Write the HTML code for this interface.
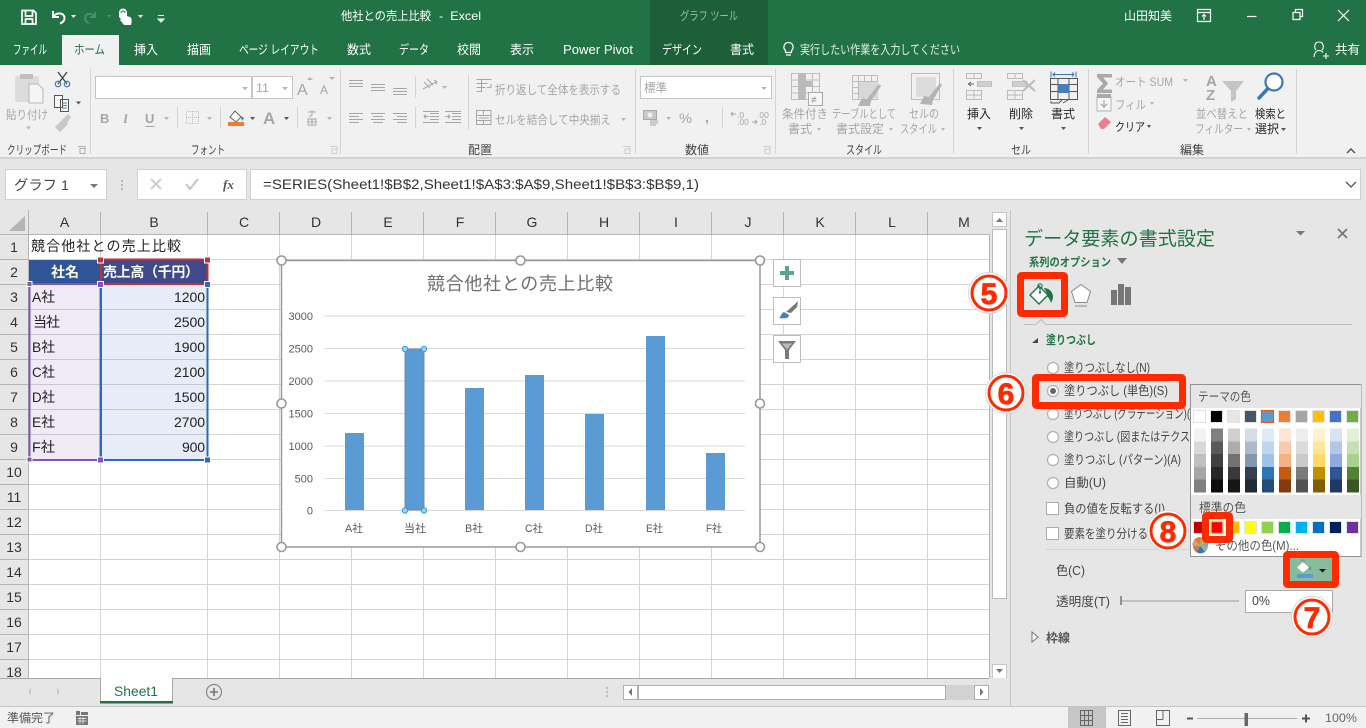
<!DOCTYPE html>
<html lang="ja"><head><meta charset="utf-8"><title>他社との売上比較 - Excel</title>
<style>
html,body{margin:0;padding:0;width:1366px;height:728px;overflow:hidden;background:#e6e6e6}
svg{display:block;position:absolute;left:0;top:0}
text{font-family:"Liberation Sans","Noto Sans CJK JP",sans-serif;font-size:12px;fill:#444;white-space:pre}
.w text,text.w{fill:#fff}
.t text{font-size:12.500px}
.g text,text.g{fill:#a6a6a6}
.d text,text.d{fill:#262626}
.c text{fill:#333;font-size:14px}
.p text{fill:#444;font-size:12.500px}
.s{fill:none;stroke:#a6a6a6;stroke-width:1}
.a{fill:#8a8a8a}
.ag{fill:#b5b5b5}
</style></head><body>
<svg width="1366" height="728" viewBox="0 0 1366 728" xmlns="http://www.w3.org/2000/svg">
<rect width="1366" height="728" fill="#e6e6e6"/>
<!-- title bar -->
<rect width="1366" height="65" fill="#217346"/>
<rect x="650" width="118" height="65" fill="#1d5f39"/>
<rect x="62" y="35" width="57" height="30" fill="#f1f1f1"/>
<!-- QAT -->
<g fill="none" stroke="#fff" stroke-width="1.700">
<path d="M22 10.500H33.500L36 13V24H22Z"/><path d="M25.500 11V16H32.500V11M25.500 23.500V19H32.500V23.500"/>
<path d="M53 11V17H59M53.500 16.500C56 12.500 62 12.500 64 16C65.500 19 63.500 22.500 60 23.500" stroke-width="2"/>
</g>
<path d="M71 15h5l-2.500 3z" fill="#fff"/>
<g fill="none" stroke="#4d8f69" stroke-width="1.900"><path d="M95 12V17H90M94.500 16.500C92 13 87 13 85.500 16C84 19 86 22 89 23"/></g>
<path d="M107 15h4l-2 3z" fill="#4d8f69"/>
<path d="M119 13c0-6 8-6 8 0v3l3 1c2 1 2 3 1 8h-7l-4-5 1-1-2-2z" fill="#fff"/><path d="M121 13a2 2 0 0 1 4 0" stroke="#217346" fill="none"/>
<path d="M138 15h5l-2.500 3z" fill="#fff"/>
<path d="M158 15.500h6M158 19h6l-3 3z" stroke="#fff" fill="#fff"/>
<g class="w">
<text x="341" y="20" textLength="90" lengthAdjust="spacingAndGlyphs">他社との売上比較</text>
<text x="439" y="20" textLength="42" lengthAdjust="spacingAndGlyphs">-  Excel</text>
<text x="1124" y="20" textLength="48" lengthAdjust="spacingAndGlyphs">山田知美</text>
</g>
<g class="w t">
<text x="13" y="54" textLength="34" lengthAdjust="spacingAndGlyphs">ファイル</text>
<text x="134" y="54" textLength="24" lengthAdjust="spacingAndGlyphs">挿入</text>
<text x="187" y="54" textLength="24" lengthAdjust="spacingAndGlyphs">描画</text>
<text x="239" y="54" textLength="80" lengthAdjust="spacingAndGlyphs">ページ レイアウト</text>
<text x="347" y="54" textLength="24" lengthAdjust="spacingAndGlyphs">数式</text>
<text x="399" y="54" textLength="30" lengthAdjust="spacingAndGlyphs">データ</text>
<text x="457" y="54" textLength="24" lengthAdjust="spacingAndGlyphs">校閲</text>
<text x="510" y="54" textLength="24" lengthAdjust="spacingAndGlyphs">表示</text>
<text x="563" y="54" textLength="70" lengthAdjust="spacingAndGlyphs">Power Pivot</text>
<text x="662" y="54" textLength="40" lengthAdjust="spacingAndGlyphs">デザイン</text>
<text x="730" y="54" textLength="24" lengthAdjust="spacingAndGlyphs">書式</text>
<text x="800" y="54" textLength="160" lengthAdjust="spacingAndGlyphs" style="fill:#e4eee8">実行したい作業を入力してください</text>
<text x="1335" y="54" textLength="25" lengthAdjust="spacingAndGlyphs">共有</text>
</g>
<text x="74" y="54" textLength="31" lengthAdjust="spacingAndGlyphs" style="fill:#217346;font-size:12.500px">ホーム</text>
<text x="680" y="20" textLength="58" lengthAdjust="spacingAndGlyphs" style="fill:#9dbda9">グラフ ツール</text>
<g fill="none" stroke="#fff" stroke-width="1.200">
<path d="M1197.500 9.500h13v12h-13zM1197.500 12.500h13M1204 20v-5M1202 16.500l2-2 2 2"/>
<path d="M1247 16.500h9.500"/>
<path d="M1293 12.500h7v7h-7zM1295.500 12v-2.500h7v7h-2.500"/>
<path d="M1338 10l11 11M1349 10l-11 11"/>
<path d="M785.500 50.500c-3-2.500-1.500-8 3-8s6 5.500 3 8v2h-6zM786 55h5"/>
<path d="M1316 50c-2-2-2-8 3-8s5 6 3 8M1314 57c.5-5 3-6.500 5-6.500s3 .5 4 2M1323 56h6M1326 53v6" stroke-width="1.100"/>
</g>
<!-- ribbon -->
<rect y="65" width="1366" height="93" fill="#f1f1f1"/>
<rect y="157" width="1366" height="2" fill="#d2d2d2"/>
<path class="s" style="stroke:#d4d4d4" d="M90.500 69V154M340.500 69V154M635.500 69V154M775.500 69V154M953.500 69V154M1088.500 69V154M1296.500 69V154M468.500 75V130M722.500 107V128M415.500 76V98M415.500 107V128M177.500 107V128M220.500 107V128M297.500 107V128"/>
<!-- clipboard -->
<rect x="15" y="76" width="24" height="26" rx="2" fill="#dcdcdc"/><rect x="20" y="74" width="13" height="5" rx="1" fill="#c0c0c0"/>
<path d="M29 84h9l5 5v14H29z" fill="#f5f5f5" stroke="#b8b8b8"/>
<g fill="none" stroke="#444" stroke-width="1.300"><path d="M58 72l9 12M67 72l-9 12"/></g>
<circle cx="58" cy="84" r="2.700" fill="none" stroke="#4a7fb8" stroke-width="1.300"/><circle cx="67" cy="84" r="2.700" fill="none" stroke="#4a7fb8" stroke-width="1.300"/>
<path d="M54.500 95.500h8v12h-8zM60.500 99.500h8v12h-8z" fill="#f8f8f8" stroke="#555"/><path d="M62 103h5M62 105.500h5M62 108h5" stroke="#4a7fb8"/>
<path d="M76 101.500h5l-2.500 3z" fill="#555"/>
<path d="M55 127l8-8 5 5-8 8zM63 119l5-5 3 3-4 6z" fill="#c8c8c8"/>
<path d="M26 126.500h5l-2.500 3z" class="ag"/>
<g class="g">
<text x="6" y="119" textLength="42" lengthAdjust="spacingAndGlyphs">貼り付け</text>
</g>
<rect x="95.500" y="76.500" width="156" height="22" fill="#fff" stroke="#c6c6c6"/>
<rect x="252.500" y="76.500" width="40" height="22" fill="#fff" stroke="#c6c6c6"/>
<path d="M242 87h6l-3 3zM282 87h6l-3 3z" class="ag"/>
<g class="g">
<text x="256" y="92" textLength="13" lengthAdjust="spacingAndGlyphs">11</text>
<text x="297" y="95" style="font-size:16px">A</text><text x="320" y="94" style="font-size:12px">A</text>
<text x="100" y="123" style="font-weight:bold;font-size:13px">B</text><text x="123" y="123" style="font-style:italic;font-weight:bold;font-size:13px;font-family:'Liberation Serif',serif">I</text><text x="145" y="123" style="font-weight:bold;font-size:13px">U</text>
<text x="263" y="124" style="font-size:17px;font-weight:bold">A</text>
</g>
<path d="M307 80l3-3 3 3zM329 77h6l-3 3z" class="ag"/>
<path d="M145.500 126.500h9" class="s"/>
<path d="M164 117h5l-2.500 3zM207 117h5l-2.500 3zM327 117h5l-2.500 3z" class="ag"/>
<path d="M250 117h5l-2.500 3zM284 117h5l-2.500 3z" fill="#555"/>
<rect x="186.500" y="111.500" width="12" height="12" fill="none" stroke="#bbb" stroke-dasharray="1 1"/><path d="M192.500 111v13M186 117.500h13" stroke="#bbb" stroke-dasharray="1 1"/>
<path d="M235 111l6 6-5 5-6-5z" fill="#fff" stroke="#666"/><path d="M241 116l3 2-2 3z" fill="#2e75b6"/>
<rect x="228" y="122" width="16" height="4" fill="#ed7d31"/>
<path d="M308 112h8M312 110v5l-3 2M308 119h8v6h-8zM312 119v6M308 122h8" class="s"/>
<!-- alignment -->
<path class="s" d="M349 80.500h14M349 83.500h14M349 86.500h14M371 84.500h14M371 87.500h14M371 90.500h14M393 88.500h14M393 91.500h14M393 94.500h14M349 113.500h14M349 116.500h10M349 119.500h14M349 122.500h10M371 113.500h14M373 116.500h10M371 119.500h14M373 122.500h10M393 113.500h14M397 116.500h10M393 119.500h14M397 122.500h10M430 113.500h9M430 116.500h9M430 119.500h9M423 122.500h16M423 111.500h16M452 113.500h9M452 116.500h9M452 119.500h9M445 122.500h16M445 111.500h16"/>
<path class="s" stroke-width="1.200" d="M429 116.500h-5M426 114.500l-2 2 2 2M445 116.500h5M448 114.500l2 2-2 2M423 89l13-7M434 80l3 1.500-1 3M424 82l6 6M427 79l6 6"/>
<path d="M442 86h5l-2.500 3z" class="ag"/>
<path class="s" d="M476.500 79.500h15M476.500 83.500h11M476.500 87.500h9M476.500 91.500h5v-12M491 84v3.500h-4M476.500 110.500h14.500v14h-14.500zM476.500 115.500h14.500M476.500 120.500h14.500M483.500 110.500v4M483.500 120.500v4M479 118h10"/>
<g class="g">
<text x="495" y="94" textLength="126" lengthAdjust="spacingAndGlyphs">折り返して全体を表示する</text>
<text x="495" y="124" textLength="116" lengthAdjust="spacingAndGlyphs">セルを結合して中央揃え</text>
</g>
<path d="M621 118h5l-2.500 3z" class="ag"/>
<!-- number -->
<rect x="640.500" y="76.500" width="131" height="22" fill="#fff" stroke="#c6c6c6"/>
<path d="M761 87h6l-3 3z" class="ag"/>
<g class="g"><text x="644" y="92" textLength="23" lengthAdjust="spacingAndGlyphs">標準</text>
<text x="679" y="123" style="font-size:14px" textLength="13" lengthAdjust="spacingAndGlyphs">%</text>
<text x="705" y="122" style="font-size:14px;font-weight:bold">,</text>
<text x="737" y="118" style="font-size:8.500px">.0</text><text x="737" y="125" style="font-size:8.500px">.00</text>
<text x="757" y="118" style="font-size:8.500px">.00</text><text x="759" y="125" style="font-size:8.500px">.0</text></g>
<path d="M731 114h5M733 112l-2 2 2 2M752 122h5M755 120l2 2-2 2" class="s"/>
<rect x="643.500" y="110.500" width="13" height="9" fill="#c8c8c8" stroke="#aaa"/><circle cx="650" cy="115" r="2.500" fill="#f1f1f1"/><path d="M650 121h8M650 123h8M650 125h6" class="s"/>
<path d="M666 117h5l-2.500 3z" class="ag"/>
<!-- styles -->
<g fill="none" stroke="#bdbdbd">
<path d="M791.500 73.500h28v26h-28zM791.500 80h28M791.500 86.500h28M791.500 93h28M798.500 73.500v26M805.500 73.500v26M812.500 73.500v26"/>
<path d="M852.500 75.500h25v24h-25zM852.500 81.500h25M852.500 87.500h25M852.500 93.500h25M858.500 75.500v24M864.500 75.500v24M871.500 75.500v24"/>
<path d="M911.500 73.500h28v26h-28z"/>
</g>
<rect x="799" y="74" width="6" height="25" fill="#b9b9b9"/><rect x="799" y="81" width="13" height="5" fill="#b9b9b9"/>
<rect x="808.500" y="92.500" width="14" height="13" fill="#f6f6f6" stroke="#aaa"/><text x="811" y="103" style="font-size:10px;fill:#888">≠</text>
<rect x="859" y="82" width="19" height="16" fill="#d8d8d8"/><rect x="916" y="77" width="20" height="20" fill="#dcdcdc"/>
<path d="M858 106l4-8 5 1 12-15 2 2-10 15-1 5z" fill="#b4b4b4"/><path d="M920 104l4-8 5 1 11-14 2 2-9 15-1 5z" fill="#b4b4b4"/>
<g class="g">
<text x="782" y="118" textLength="46" lengthAdjust="spacingAndGlyphs">条件付き</text>
<text x="788" y="133" textLength="24" lengthAdjust="spacingAndGlyphs">書式</text>
<text x="832" y="118" textLength="64" lengthAdjust="spacingAndGlyphs">テーブルとして</text>
<text x="836" y="133" textLength="48" lengthAdjust="spacingAndGlyphs">書式設定</text>
<text x="909" y="118" textLength="30" lengthAdjust="spacingAndGlyphs">セルの</text>
<text x="900" y="133" textLength="37" lengthAdjust="spacingAndGlyphs">スタイル</text>
<text x="1115" y="86" textLength="58" lengthAdjust="spacingAndGlyphs">オート SUM</text>
<text x="1115" y="109" textLength="31" lengthAdjust="spacingAndGlyphs">フィル</text>
<text x="1196" y="118" textLength="52" lengthAdjust="spacingAndGlyphs">並べ替えと</text>
<text x="1195" y="133" textLength="48" lengthAdjust="spacingAndGlyphs">フィルター</text>
</g>
<path d="M817 128h4l-2 3zM889 128h4l-2 3zM941 128h4l-2 3zM1183 79h5l-2.500 3zM1150 102h4l-2 3zM1247 128h4l-2 3z" class="ag"/>
<!-- cells -->
<path d="M966.500 73.500h15v5h-15zM974 73.500v5M966.500 90.500h15v9h-15zM966.500 95h15M974 90.500v9M977.500 81.500h14v5h-14zM984.500 81.500v5M1007.500 73.500h15v5h-15zM1015 73.500v5M1007.500 90.500h15v9h-15zM1007.500 95h15M1015 90.500v9M1012.500 81.500h14v5h-14z" fill="none" stroke="#bbb"/>
<path d="M978 81.500h13v5h-13zM1013 81.500h13v5h-13z" fill="#d0d0d0"/>
<path d="M974 84h-6M971 82l-2.500 2 2.500 2" stroke="#666" fill="none"/>
<path d="M1023 80l12 11M1035 80l-12 11" stroke="#bbb" stroke-width="2"/>
<g fill="none" stroke="#555"><path d="M1050.500 78.500h27v21h-27zM1050.500 84.500h27M1050.500 91.500h27M1058 78.500v21M1069 78.500v21M1051 101v2h8l3-3M1063 103l5-3"/></g>
<rect x="1058" y="84" width="11" height="9" fill="#4a7ebb"/>
<path d="M1051 71.500v6M1076 71.500v6M1053 74.500h21M1055 72.500l-2 2 2 2M1072 72.500l2 2-2 2" fill="none" stroke="#3a75b5"/>
<g class="d">
<text x="967" y="118" textLength="24" lengthAdjust="spacingAndGlyphs">挿入</text>
<text x="1009" y="118" textLength="24" lengthAdjust="spacingAndGlyphs">削除</text>
<text x="1051" y="118" textLength="24" lengthAdjust="spacingAndGlyphs">書式</text>
<text x="1115" y="131" textLength="30" lengthAdjust="spacingAndGlyphs">クリア</text>
<text x="1255" y="118" textLength="31" lengthAdjust="spacingAndGlyphs">検索と</text>
<text x="1255" y="133" textLength="24" lengthAdjust="spacingAndGlyphs">選択</text>
</g>
<path d="M977 127h5l-2.500 3zM1019 127h5l-2.500 3zM1061 127h5l-2.500 3zM1147 125h4l-2 3zM1281 128h5l-2.500 3z" fill="#555"/>
<path d="M1097 74h15v3.500h-9l5 6-5 6h9v3.500h-15v-3l6-6.500-6-6.500z" fill="#a9a9a9"/>
<rect x="1097" y="97" width="14" height="14" fill="#f5f5f5" stroke="#b5b5b5"/><rect x="1097" y="94" width="14" height="4" fill="#a9a9a9"/><path d="M1104 100v7M1101 104l3 3 3-3" stroke="#999" fill="none"/>
<path d="M1098 124l7-7 6 5-7 7h-3z" fill="#e8808f"/>
<text class="g" x="1206" y="86" style="font-size:15px;font-weight:bold">A</text><text class="g" x="1206" y="100" style="font-size:15px;font-weight:bold">Z</text>
<path d="M1222 81h22l-8 10v8l-5 3V91z" fill="#c4c4c4"/>
<circle cx="1274" cy="82" r="8.500" fill="#fff" stroke="#3a78b8" stroke-width="2.200"/><path d="M1267.500 89l-8.500 9" stroke="#3a78b8" stroke-width="3.500" stroke-linecap="round"/>
<path d="M1347 153l4-4 4 4" stroke="#555" stroke-width="1.500" fill="none"/>
<path d="M78 146.500h7v7M80 148.500h5v5h-5z" fill="none" stroke="#9a9a9a" stroke-width=".8"/>
<path d="M330 146.500h7v7M332 149h5v4.500h-5zM623 146.500h7v7M625 149h5v4.500h-5zM763 146.500h7v7M765 149h5v4.500h-5z" fill="none" stroke="#c2c2c2" stroke-width=".8"/>
<g>
<text x="7" y="154" textLength="60" lengthAdjust="spacingAndGlyphs">クリップボード</text>
<text x="191" y="154" textLength="34" lengthAdjust="spacingAndGlyphs">フォント</text>
<text x="468" y="154" textLength="24" lengthAdjust="spacingAndGlyphs">配置</text>
<text x="685" y="154" textLength="24" lengthAdjust="spacingAndGlyphs">数値</text>
<text x="846" y="154" textLength="36" lengthAdjust="spacingAndGlyphs">スタイル</text>
<text x="1011" y="154" textLength="20" lengthAdjust="spacingAndGlyphs">セル</text>
<text x="1180" y="154" textLength="24" lengthAdjust="spacingAndGlyphs">編集</text>
</g>
<!-- formula bar -->
<rect x="5.500" y="169.500" width="101" height="30" fill="#fff" stroke="#d0d0d0"/>
<text x="14" y="190" style="font-size:14px" textLength="55" lengthAdjust="spacingAndGlyphs">グラフ 1</text>
<path d="M90 184h8l-4 4z" fill="#777"/>
<path d="M122 180v2M122 184v2M122 188v2" stroke="#aaa" stroke-width="1.500"/>
<rect x="137.500" y="169.500" width="109" height="30" fill="#fff" stroke="#d0d0d0"/>
<rect x="250.500" y="169.500" width="1110" height="30" fill="#fff" stroke="#d0d0d0"/>
<path d="M151 179l10 10M161 179l-10 10" stroke="#c4c4c4" stroke-width="1.600"/>
<path d="M186 184l4 5 8-10" stroke="#c4c4c4" stroke-width="2" fill="none"/>
<text x="223" y="189" style="font-size:13px;font-style:italic;font-family:'Liberation Serif',serif;fill:#555;font-weight:bold">fx</text>
<text x="263" y="189" style="font-size:14px;fill:#333" textLength="436" lengthAdjust="spacingAndGlyphs">=SERIES(Sheet1!$B$2,Sheet1!$A$3:$A$9,Sheet1!$B$3:$B$9,1)</text>
<path d="M1346 182l5 5 5-5" stroke="#555" stroke-width="1.300" fill="none"/>
<!-- sheet -->
<rect x="0" y="210" width="989" height="468" fill="#fff"/>
<rect x="0" y="210" width="989" height="24" fill="#e6e6e6"/>
<rect x="0" y="210" width="28" height="468" fill="#e6e6e6"/>
<path d="M25 216V231H9z" fill="#b4b4b4"/>
<path stroke="#d4d4d4" fill="none" d="M100.500 234V678M207.500 234V678M279.500 234V678M351.500 234V678M423.500 234V678M495.500 234V678M567.500 234V678M639.500 234V678M711.500 234V678M783.500 234V678M855.500 234V678M927.500 234V678M29 259.500H989M29 284.500H989M29 309.500H989M29 334.500H989M29 359.500H989M29 384.500H989M29 409.500H989M29 434.500H989M29 459.500H989M29 484.500H989M29 509.500H989M29 534.500H989M29 559.500H989M29 584.500H989M29 609.500H989M29 634.500H989M29 659.500H989"/>
<path stroke="#b4b4b4" fill="none" d="M28.500 210V678M0 234.500H989M100.500 212V234M207.500 212V234M279.500 212V234M351.500 212V234M423.500 212V234M495.500 212V234M567.500 212V234M639.500 212V234M711.500 212V234M783.500 212V234M855.500 212V234M927.500 212V234M0 259.500H28M0 284.500H28M0 309.500H28M0 334.500H28M0 359.500H28M0 384.500H28M0 409.500H28M0 434.500H28M0 459.500H28M0 484.500H28M0 509.500H28M0 534.500H28M0 559.500H28M0 584.500H28M0 609.500H28M0 634.500H28M0 659.500H28"/>
<g class="c" text-anchor="middle">
<text x="64.500" y="227">A</text><text x="154" y="227">B</text><text x="244" y="227">C</text><text x="316" y="227">D</text><text x="388" y="227">E</text><text x="460" y="227">F</text><text x="532" y="227">G</text><text x="604" y="227">H</text><text x="676" y="227">I</text><text x="748" y="227">J</text><text x="820" y="227">K</text><text x="892" y="227">L</text><text x="964" y="227">M</text>
<text x="14" y="252">1</text><text x="14" y="277">2</text><text x="14" y="302">3</text><text x="14" y="327">4</text><text x="14" y="352">5</text><text x="14" y="377">6</text><text x="14" y="402">7</text><text x="14" y="427">8</text><text x="14" y="452">9</text><text x="14" y="477">10</text><text x="14" y="502">11</text><text x="14" y="527">12</text><text x="14" y="552">13</text><text x="14" y="577">14</text><text x="14" y="602">15</text><text x="14" y="627">16</text><text x="14" y="652">17</text><text x="14" y="677">18</text>
</g>
<!-- cells data -->
<rect x="29" y="260" width="71" height="24" fill="#2f5597"/>
<rect x="101" y="260" width="106" height="24" fill="#3f4a8a"/>
<rect x="29" y="285" width="71" height="174" fill="#efeaf6"/>
<rect x="101" y="285" width="106" height="174" fill="#e6edf8"/>
<path stroke="#c5c8d0" d="M29 309.500H100M29 334.500H100M29 359.500H100M29 384.500H100M29 409.500H100M29 434.500H100M101 309.500H207M101 334.500H207M101 359.500H207M101 384.500H207M101 409.500H207M101 434.500H207"/>
<text x="31" y="251" style="font-size:14px;fill:#222" textLength="150" lengthAdjust="spacing">競合他社との売上比較</text>
<text class="w" x="51" y="277" style="font-size:14px;font-weight:bold" textLength="28" lengthAdjust="spacingAndGlyphs">社名</text>
<text class="w" x="103" y="277" style="font-size:14px;font-weight:bold" textLength="96" lengthAdjust="spacing">売上高（千円）</text>
<g>
<text x="32" y="302" style="font-size:14px;fill:#222" textLength="23" lengthAdjust="spacingAndGlyphs">A社</text>
<text x="33" y="327" style="font-size:14px;fill:#222" textLength="27" lengthAdjust="spacing">当社</text>
<text x="32" y="352" style="font-size:14px;fill:#222" textLength="23" lengthAdjust="spacingAndGlyphs">B社</text>
<text x="32" y="377" style="font-size:14px;fill:#222" textLength="23" lengthAdjust="spacingAndGlyphs">C社</text>
<text x="32" y="402" style="font-size:14px;fill:#222" textLength="23" lengthAdjust="spacingAndGlyphs">D社</text>
<text x="32" y="427" style="font-size:14px;fill:#222" textLength="23" lengthAdjust="spacingAndGlyphs">E社</text>
<text x="32" y="452" style="font-size:14px;fill:#222" textLength="23" lengthAdjust="spacingAndGlyphs">F社</text>
<text x="174" y="302" style="font-size:14px;fill:#222" textLength="31">1200</text>
<text x="174" y="327" style="font-size:14px;fill:#222" textLength="31">2500</text>
<text x="174" y="352" style="font-size:14px;fill:#222" textLength="31">1900</text>
<text x="174" y="377" style="font-size:14px;fill:#222" textLength="31">2100</text>
<text x="174" y="402" style="font-size:14px;fill:#222" textLength="31">1500</text>
<text x="174" y="427" style="font-size:14px;fill:#222" textLength="31">2700</text>
<text x="182" y="452" style="font-size:14px;fill:#222" textLength="23">900</text>
</g>
<!-- selection ranges -->
<rect x="29.500" y="284" width="71" height="176" fill="none" stroke="#7f55b5" stroke-width="2"/>
<rect x="101" y="284" width="106.500" height="176" fill="none" stroke="#2f66c0" stroke-width="2"/>
<rect x="101" y="259.500" width="106.500" height="24.500" fill="none" stroke="#c0303c" stroke-width="2"/>
<g stroke="#fff">
<rect x="27" y="281.500" width="5" height="5" fill="#7f55b5"/><rect x="97.500" y="281.500" width="6" height="6" fill="#7f55b5"/><rect x="27" y="457" width="5" height="5" fill="#7f55b5"/><rect x="97.500" y="457" width="6" height="6" fill="#7f55b5"/>
<rect x="97.500" y="257" width="6" height="6" fill="#c0303c"/><rect x="204.500" y="257" width="6" height="6" fill="#c0303c"/><rect x="204.500" y="281.500" width="6" height="6" fill="#2f66c0"/><rect x="204.500" y="457" width="6" height="6" fill="#2f66c0"/>
</g>
<!-- chart -->
<rect x="281.500" y="260.500" width="478.500" height="286.500" fill="#fff" stroke="#999" stroke-width="1.500"/>
<text x="427" y="290" style="font-size:18px;fill:#6f6f6f" textLength="186" lengthAdjust="spacing">競合他社との売上比較</text>
<path stroke="#d9d9d9" d="M324.500 316H745M324.500 348.500H745M324.500 381H745M324.500 413.500H745M324.500 446H745M324.500 478.500H745M324.500 510.500H745"/>
<g text-anchor="end">
<text x="313" y="320" style="font-size:11px;fill:#595959">3000</text><text x="313" y="352.500" style="font-size:11px;fill:#595959">2500</text><text x="313" y="385" style="font-size:11px;fill:#595959">2000</text><text x="313" y="417.500" style="font-size:11px;fill:#595959">1500</text><text x="313" y="450" style="font-size:11px;fill:#595959">1000</text><text x="313" y="482.500" style="font-size:11px;fill:#595959">500</text><text x="313" y="514.500" style="font-size:11px;fill:#595959">0</text>
</g>
<g fill="#5b9bd5">
<rect x="345" y="433" width="19" height="77"/><rect x="405" y="349" width="19" height="161"/><rect x="465" y="388" width="19" height="122"/><rect x="525" y="375" width="19" height="135"/><rect x="585" y="414" width="19" height="96"/><rect x="646" y="336" width="19" height="174"/><rect x="706" y="453" width="19" height="57"/>
</g>
<rect x="405" y="349" width="19" height="161" fill="none" stroke="#7d8a96" stroke-width="1"/>
<g fill="#9fd0f5" stroke="#2e9be6" stroke-width="1"><circle cx="405" cy="349" r="2.700"/><circle cx="424" cy="349" r="2.700"/><circle cx="405" cy="510.500" r="2.700"/><circle cx="424" cy="510.500" r="2.700"/></g>
<g>
<text x="345" y="532" style="font-size:11px;fill:#595959" textLength="18" lengthAdjust="spacingAndGlyphs">A社</text>
<text x="404" y="532" style="font-size:11px;fill:#595959" textLength="22" lengthAdjust="spacingAndGlyphs">当社</text>
<text x="465" y="532" style="font-size:11px;fill:#595959" textLength="18" lengthAdjust="spacingAndGlyphs">B社</text>
<text x="525" y="532" style="font-size:11px;fill:#595959" textLength="18" lengthAdjust="spacingAndGlyphs">C社</text>
<text x="585" y="532" style="font-size:11px;fill:#595959" textLength="18" lengthAdjust="spacingAndGlyphs">D社</text>
<text x="646" y="532" style="font-size:11px;fill:#595959" textLength="17" lengthAdjust="spacingAndGlyphs">E社</text>
<text x="706" y="532" style="font-size:11px;fill:#595959" textLength="16" lengthAdjust="spacingAndGlyphs">F社</text>
</g>
<g fill="#fff" stroke="#999" stroke-width="1.600"><circle cx="281.500" cy="260.500" r="4.500"/><circle cx="520.500" cy="260.500" r="4.500"/><circle cx="760" cy="260.500" r="4.500"/><circle cx="281.500" cy="403.500" r="4.500"/><circle cx="760" cy="403.500" r="4.500"/><circle cx="281.500" cy="547" r="4.500"/><circle cx="520.500" cy="547" r="4.500"/><circle cx="760" cy="547" r="4.500"/></g>
<g fill="#fff" stroke="#bdbdbd"><rect x="773.500" y="259.500" width="27" height="27"/><rect x="773.500" y="297.500" width="27" height="27"/><rect x="773.500" y="335.500" width="27" height="27"/></g>
<path d="M785 266h4v5h5v4h-5v5h-4v-5h-5v-4h5z" fill="#5ea588"/>
<path d="M786 312l9-8 3-3-1 6-6 6z" fill="#777"/><path d="M779 318c2-1 2-5 5-6l5 3c0 3-3 4-10 3z" fill="#4a7ebb"/>
<path d="M778 341h18l-7 9v9h-4v-9z" fill="#7b7b7b"/><path d="M782 343.500h10l-5 6z" fill="#bbb"/>
<!-- scroll bars -->
<rect x="989" y="210" width="21" height="496" fill="#e6e6e6"/>
<path d="M989.500 234V678" stroke="#b4b4b4"/>
<rect x="992.500" y="212.500" width="14" height="14" fill="#fff" stroke="#c6c6c6"/><path d="M996 222l3.500-4 3.500 4z" fill="#777"/>
<rect x="992.500" y="229.500" width="14" height="369" fill="#fff" stroke="#bbb"/>
<rect x="992.500" y="664.500" width="14" height="14" fill="#fff" stroke="#c6c6c6"/><path d="M996 669h7l-3.500 4z" fill="#777"/>
<rect x="0" y="678" width="1010" height="28" fill="#e6e6e6"/>
<path d="M0 678.500H989" stroke="#a8a8a8"/>
<path d="M31 688v7l-3-3.500zM57 688v7l3-3.500z" fill="#c8c8c8"/>
<rect x="100" y="678" width="72.500" height="25" fill="#fff"/>
<path d="M100.500 678v25M172.500 678v25" stroke="#a8a8a8"/>
<rect x="100" y="701" width="73" height="2.500" fill="#217346"/>
<text x="114" y="696" style="font-size:14px;fill:#217346" textLength="44" lengthAdjust="spacingAndGlyphs">Sheet1</text>
<circle cx="214" cy="692" r="7.500" fill="none" stroke="#8a8a8a" stroke-width="1.200"/><path d="M214 688v8M210 692h8" stroke="#777" stroke-width="1.600"/>
<path d="M607 687v2M607 691v2M607 695v2" stroke="#aaa" stroke-width="1.500"/>
<rect x="623.500" y="685.500" width="14" height="14" fill="#fff" stroke="#b0b0b0"/><path d="M632 688v8l-3.500-4z" fill="#777"/>
<rect x="638" y="685" width="336" height="15" fill="#d2d2d2"/>
<rect x="638.500" y="685.500" width="307" height="14" fill="#fff" stroke="#b0b0b0"/>
<rect x="974.500" y="685.500" width="14" height="14" fill="#fff" stroke="#b0b0b0"/><path d="M980 688v8l3.500-4z" fill="#777"/>
<!-- status bar -->
<rect y="706" width="1366" height="22" fill="#f1f1f1"/><path d="M0 706.500H1366" stroke="#c6c6c6"/>
<text x="7" y="722" textLength="48" lengthAdjust="spacingAndGlyphs" style="fill:#555">準備完了</text>
<path d="M76 711h4v4h-4zM81 712h7v3h-7zM76 716h12v9H76z" fill="#777"/><path d="M77.500 718.500h9M77.500 721h9M80 717v7M83 717v7" stroke="#f1f1f1" stroke-width=".7"/>
<rect x="1068" y="707" width="38" height="21" fill="#c6c6c6"/>
<path d="M1080.500 710.500h12v15h-12zM1080.500 715.500h12M1080.500 720.500h12M1084.500 710.500v15M1088.500 710.500v15" fill="none" stroke="#666"/>
<path d="M1118.500 710.500h12v15h-12z" fill="none" stroke="#666"/><path d="M1121 713.500h7M1121 716.500h7M1121 719.500h7M1121 722.500h7" stroke="#666" stroke-width="1"/>
<path d="M1156.500 710.500h13v15h-13zM1156.500 719.500h6.500M1163 710.500v9" fill="none" stroke="#666"/>
<path d="M1187 718.500h6" stroke="#555" stroke-width="2"/>
<path d="M1197 718.500h100" stroke="#aaa"/><rect x="1244.500" y="713" width="3.500" height="13" fill="#666"/>
<path d="M1302 718.500h8M1306 714.500v8" stroke="#555" stroke-width="2"/>
<text x="1325" y="722" textLength="32" lengthAdjust="spacingAndGlyphs" style="fill:#666">100%</text>
<!-- task pane -->
<path d="M1010.500 210V706" stroke="#c6c6c6"/>
<text x="1024" y="245" style="font-size:19px;fill:#217346" textLength="191" lengthAdjust="spacingAndGlyphs">データ要素の書式設定</text>
<path d="M1296 231h9l-4.500 4.500z" fill="#777"/><path d="M1338 229l9 9M1347 229l-9 9" stroke="#777" stroke-width="1.800"/>
<text x="1029" y="266" style="font-size:11.500px;font-weight:bold;fill:#217346" textLength="82" lengthAdjust="spacingAndGlyphs">系列のオプション</text>
<path d="M1117 258h10l-5 6z" fill="#777"/>
<path d="M1024 324.500H1036l5-5 5 5H1352" fill="none" stroke="#bdbdbd"/>
<rect x="1020.500" y="275.500" width="44" height="38" rx="1" fill="none" stroke="#ff2a00" stroke-width="7"/>
<path d="M1039 286l9 9-9 9-9-9z" fill="#fff" stroke="#217346" stroke-width="1.400"/>
<circle cx="1040" cy="286" r="2.200" fill="none" stroke="#217346" stroke-width="1.100"/><path d="M1040 288v4" stroke="#217346" stroke-width="1.100"/><circle cx="1040" cy="292.500" r="1.200" fill="#217346"/>
<path d="M1044 288C1049 288 1053 292 1053 297C1053 299 1052 301 1051 303C1050 300 1049 298 1047 296L1048 295Z" fill="#217346"/>
<path d="M1081 284.500l9.500 7-3.500 11h-12l-3.500-11z" fill="#fff" stroke="#8a8a8a"/><path d="M1075 306h12" stroke="#aaa" stroke-width="1.500"/>
<rect x="1111" y="290" width="6" height="15" fill="#767676"/><rect x="1118" y="284" width="6" height="21" fill="#767676"/><rect x="1125" y="287" width="6" height="18" fill="#767676"/>
<path d="M1032 343l6-5v5z" fill="#444"/>
<text x="1046" y="344" style="font-size:12px;font-weight:bold;fill:#217346" textLength="50" lengthAdjust="spacingAndGlyphs">塗りつぶし</text>
<g fill="#fff" stroke="#b0b0b0" stroke-width="1.200"><circle cx="1053" cy="368" r="5.500"/><circle cx="1053" cy="391" r="5.500"/><circle cx="1053" cy="414" r="5.500"/><circle cx="1053" cy="437" r="5.500"/><circle cx="1053" cy="460" r="5.500"/><circle cx="1053" cy="483" r="5.500"/></g>
<circle cx="1053" cy="391" r="3" fill="#666"/>
<rect x="1245.500" y="590.500" width="87" height="22" fill="#fff" stroke="#ababab"/>
<g class="p">
<text x="1064" y="372" textLength="86" lengthAdjust="spacingAndGlyphs">塗りつぶしなし(N)</text>
<text x="1064" y="395" textLength="104" lengthAdjust="spacingAndGlyphs">塗りつぶし (単色)(S)</text>
<text x="1064" y="418" textLength="126" lengthAdjust="spacingAndGlyphs">塗りつぶし (グラデーション)(</text>
<text x="1064" y="441" textLength="126" lengthAdjust="spacingAndGlyphs">塗りつぶし (図またはテクス</text>
<text x="1064" y="464" textLength="117" lengthAdjust="spacingAndGlyphs">塗りつぶし (パターン)(A)</text>
<text x="1064" y="487" textLength="42" lengthAdjust="spacingAndGlyphs">自動(U)</text>
<text x="1064" y="513" textLength="101" lengthAdjust="spacingAndGlyphs">負の値を反転する(I)</text>
<text x="1064" y="538" textLength="84" lengthAdjust="spacingAndGlyphs">要素を塗り分ける</text>
<text x="1056" y="575" textLength="29" lengthAdjust="spacingAndGlyphs">色(C)</text>
<text x="1056" y="606" textLength="54" lengthAdjust="spacingAndGlyphs">透明度(T)</text>
<text x="1252" y="605" textLength="18" lengthAdjust="spacingAndGlyphs">0%</text>
</g>
<rect x="1046.500" y="502.500" width="12" height="12" fill="#fff" stroke="#ababab"/>
<rect x="1046.500" y="527.500" width="12" height="12" fill="#fff" stroke="#ababab"/>
<path d="M1046 549.500H1190" stroke="#d4d4d4"/>
<path d="M1121 601H1239" stroke="#999"/><path d="M1121 596v9" stroke="#777" stroke-width="1.500"/>
<path d="M1032 632l6 5-6 5z" fill="#fff" stroke="#777"/>
<text x="1046" y="642" style="font-size:12px;font-weight:bold;fill:#555" textLength="24" lengthAdjust="spacingAndGlyphs">枠線</text>
<!-- red box 6 -->
<rect x="1035.500" y="377.500" width="147" height="28" rx="1" fill="none" stroke="#ff2a00" stroke-width="7"/>
<!-- popup -->
<rect x="1190.500" y="384.500" width="170.500" height="172" fill="#fff" stroke="#8f9499"/>
<rect x="1191" y="385" width="170" height="23" fill="#e6e6e6"/>
<rect x="1191" y="495" width="170" height="24" fill="#e6e6e6"/>
<text x="1198" y="401" style="font-size:12.500px;fill:#555" textLength="53" lengthAdjust="spacingAndGlyphs">テーマの色</text>
<text x="1199" y="512" style="font-size:12.500px;fill:#555" textLength="47" lengthAdjust="spacingAndGlyphs">標準の色</text>
<g stroke="#e2e2e2">
<rect x="1193.500" y="410.500" width="12" height="12" fill="#fff"/><rect x="1210.500" y="410.500" width="12" height="12" fill="#000"/><rect x="1227.500" y="410.500" width="12" height="12" fill="#e7e6e6"/><rect x="1244.500" y="410.500" width="12" height="12" fill="#44546a"/><rect x="1278.500" y="410.500" width="12" height="12" fill="#ed7d31"/><rect x="1295.500" y="410.500" width="12" height="12" fill="#a5a5a5"/><rect x="1312.500" y="410.500" width="12" height="12" fill="#ffc000"/><rect x="1329.500" y="410.500" width="12" height="12" fill="#4472c4"/><rect x="1346.500" y="410.500" width="12" height="12" fill="#70ad47"/>
</g>
<rect x="1261.500" y="410.500" width="12" height="12" fill="#5b9bd5" stroke="#e8590c" stroke-width="1.200"/>
<g shape-rendering="crispEdges">
<rect x="1194" y="428.500" width="12" height="13" fill="#f2f2f2"/><rect x="1194" y="441.300" width="12" height="13" fill="#d9d9d9"/><rect x="1194" y="454.100" width="12" height="13" fill="#bfbfbf"/><rect x="1194" y="466.900" width="12" height="13" fill="#a6a6a6"/><rect x="1194" y="479.700" width="12" height="13" fill="#808080"/>
<rect x="1211" y="428.500" width="12" height="13" fill="#808080"/><rect x="1211" y="441.300" width="12" height="13" fill="#595959"/><rect x="1211" y="454.100" width="12" height="13" fill="#404040"/><rect x="1211" y="466.900" width="12" height="13" fill="#262626"/><rect x="1211" y="479.700" width="12" height="13" fill="#0d0d0d"/>
<rect x="1228" y="428.500" width="12" height="13" fill="#d0cece"/><rect x="1228" y="441.300" width="12" height="13" fill="#aeabab"/><rect x="1228" y="454.100" width="12" height="13" fill="#757171"/><rect x="1228" y="466.900" width="12" height="13" fill="#3a3838"/><rect x="1228" y="479.700" width="12" height="13" fill="#171616"/>
<rect x="1245" y="428.500" width="12" height="13" fill="#d6dce5"/><rect x="1245" y="441.300" width="12" height="13" fill="#adb9ca"/><rect x="1245" y="454.100" width="12" height="13" fill="#8497b0"/><rect x="1245" y="466.900" width="12" height="13" fill="#333f50"/><rect x="1245" y="479.700" width="12" height="13" fill="#222a35"/>
<rect x="1262" y="428.500" width="12" height="13" fill="#deebf7"/><rect x="1262" y="441.300" width="12" height="13" fill="#bdd7ee"/><rect x="1262" y="454.100" width="12" height="13" fill="#9dc3e6"/><rect x="1262" y="466.900" width="12" height="13" fill="#2e75b6"/><rect x="1262" y="479.700" width="12" height="13" fill="#1f4e79"/>
<rect x="1279" y="428.500" width="12" height="13" fill="#fbe5d6"/><rect x="1279" y="441.300" width="12" height="13" fill="#f8cbad"/><rect x="1279" y="454.100" width="12" height="13" fill="#f4b183"/><rect x="1279" y="466.900" width="12" height="13" fill="#c55a11"/><rect x="1279" y="479.700" width="12" height="13" fill="#843c0c"/>
<rect x="1296" y="428.500" width="12" height="13" fill="#ededed"/><rect x="1296" y="441.300" width="12" height="13" fill="#dbdbdb"/><rect x="1296" y="454.100" width="12" height="13" fill="#c9c9c9"/><rect x="1296" y="466.900" width="12" height="13" fill="#7b7b7b"/><rect x="1296" y="479.700" width="12" height="13" fill="#525252"/>
<rect x="1313" y="428.500" width="12" height="13" fill="#fff2cc"/><rect x="1313" y="441.300" width="12" height="13" fill="#ffe699"/><rect x="1313" y="454.100" width="12" height="13" fill="#ffd966"/><rect x="1313" y="466.900" width="12" height="13" fill="#bf9000"/><rect x="1313" y="479.700" width="12" height="13" fill="#7f6000"/>
<rect x="1330" y="428.500" width="12" height="13" fill="#dae3f3"/><rect x="1330" y="441.300" width="12" height="13" fill="#b4c7e7"/><rect x="1330" y="454.100" width="12" height="13" fill="#8faadc"/><rect x="1330" y="466.900" width="12" height="13" fill="#2f5597"/><rect x="1330" y="479.700" width="12" height="13" fill="#1f3864"/>
<rect x="1347" y="428.500" width="12" height="13" fill="#e2f0d9"/><rect x="1347" y="441.300" width="12" height="13" fill="#c5e0b4"/><rect x="1347" y="454.100" width="12" height="13" fill="#a9d18e"/><rect x="1347" y="466.900" width="12" height="13" fill="#548235"/><rect x="1347" y="479.700" width="12" height="13" fill="#385723"/>
</g>
<g stroke="#e2e2e2">
<rect x="1193.500" y="521.500" width="12" height="12" fill="#c00000"/><rect x="1227.500" y="521.500" width="12" height="12" fill="#ffc000"/><rect x="1244.500" y="521.500" width="12" height="12" fill="#ffff00"/><rect x="1261.500" y="521.500" width="12" height="12" fill="#92d050"/><rect x="1278.500" y="521.500" width="12" height="12" fill="#00b050"/><rect x="1295.500" y="521.500" width="12" height="12" fill="#00b0f0"/><rect x="1312.500" y="521.500" width="12" height="12" fill="#0070c0"/><rect x="1329.500" y="521.500" width="12" height="12" fill="#002060"/><rect x="1346.500" y="521.500" width="12" height="12" fill="#7030a0"/>
</g>
<path d="M1200.500 546L1194 540a8 8 0 0 1 6.500-3z" fill="#e07b3c"/><path d="M1200.500 546V537a8 8 0 0 1 6.500 3z" fill="#c8a86a"/><path d="M1200.500 546l6.500-6a8 8 0 0 1 1 6z" fill="#7fb09a"/><path d="M1200.500 546l7.500 0a8 8 0 0 1-3 6z" fill="#8fb8a4"/><path d="M1200.500 546l4.500 6a8 8 0 0 1-9 0z" fill="#3a75b5"/><path d="M1200.500 546l-4.500 6a8 8 0 0 1-3-6z" fill="#c87a5a"/><path d="M1192.500 546a8 8 0 0 1 1.500-6l6.500 6z" fill="#d8a070"/>
<text x="1215" y="550" style="font-size:12.500px;fill:#555" textLength="84" lengthAdjust="spacingAndGlyphs">その他の色(M)...</text>
<!-- red box 8 -->
<rect x="1205.500" y="515.500" width="24" height="24" rx="1" fill="#fff" stroke="#ff2a00" stroke-width="7"/>
<rect x="1211" y="521.500" width="12" height="12" fill="#ff0000" stroke="#f5c46a" stroke-width="1.400"/>
<!-- red box 7 / colour button -->
<rect x="1286.500" y="554.500" width="49" height="30" rx="1" fill="#86bc9b" stroke="#ff2a00" stroke-width="7"/>
<path d="M1303 562l6 5.500-6 5-6-5z" fill="#fff"/><path d="M1301 560h3v3" fill="none" stroke="#888"/><path d="M1309 566l2 2-1 3z" fill="#3a75b5"/>
<rect x="1297" y="574" width="16" height="4" fill="#5b9bd5"/>
<path d="M1319 569h7l-3.500 3.500z" fill="#111"/>
<!-- callouts -->
<g fill="#fff" stroke="#d8d8d8" stroke-width="1"><circle cx="989" cy="293" r="20.500"/><circle cx="1006" cy="393" r="20.500"/><circle cx="1312" cy="617" r="20.500"/><circle cx="1168" cy="531" r="20.500"/></g>
<g fill="none" stroke="#ff2a00" stroke-width="3"><circle cx="989" cy="293" r="17"/><circle cx="1006" cy="393" r="17"/><circle cx="1312" cy="617" r="17"/><circle cx="1168" cy="531" r="17"/></g>
<g text-anchor="middle">
<text x="989" y="304" style="font-size:30px;font-weight:bold;fill:#ff2a00;stroke:#ff2a00;stroke-width:.8px">5</text>
<text x="1006" y="404" style="font-size:30px;font-weight:bold;fill:#ff2a00;stroke:#ff2a00;stroke-width:.8px">6</text>
<text x="1312" y="628" style="font-size:30px;font-weight:bold;fill:#ff2a00;stroke:#ff2a00;stroke-width:.8px">7</text>
<text x="1168" y="542" style="font-size:30px;font-weight:bold;fill:#ff2a00;stroke:#ff2a00;stroke-width:.8px">8</text>
</g>
</svg>
</body></html>
